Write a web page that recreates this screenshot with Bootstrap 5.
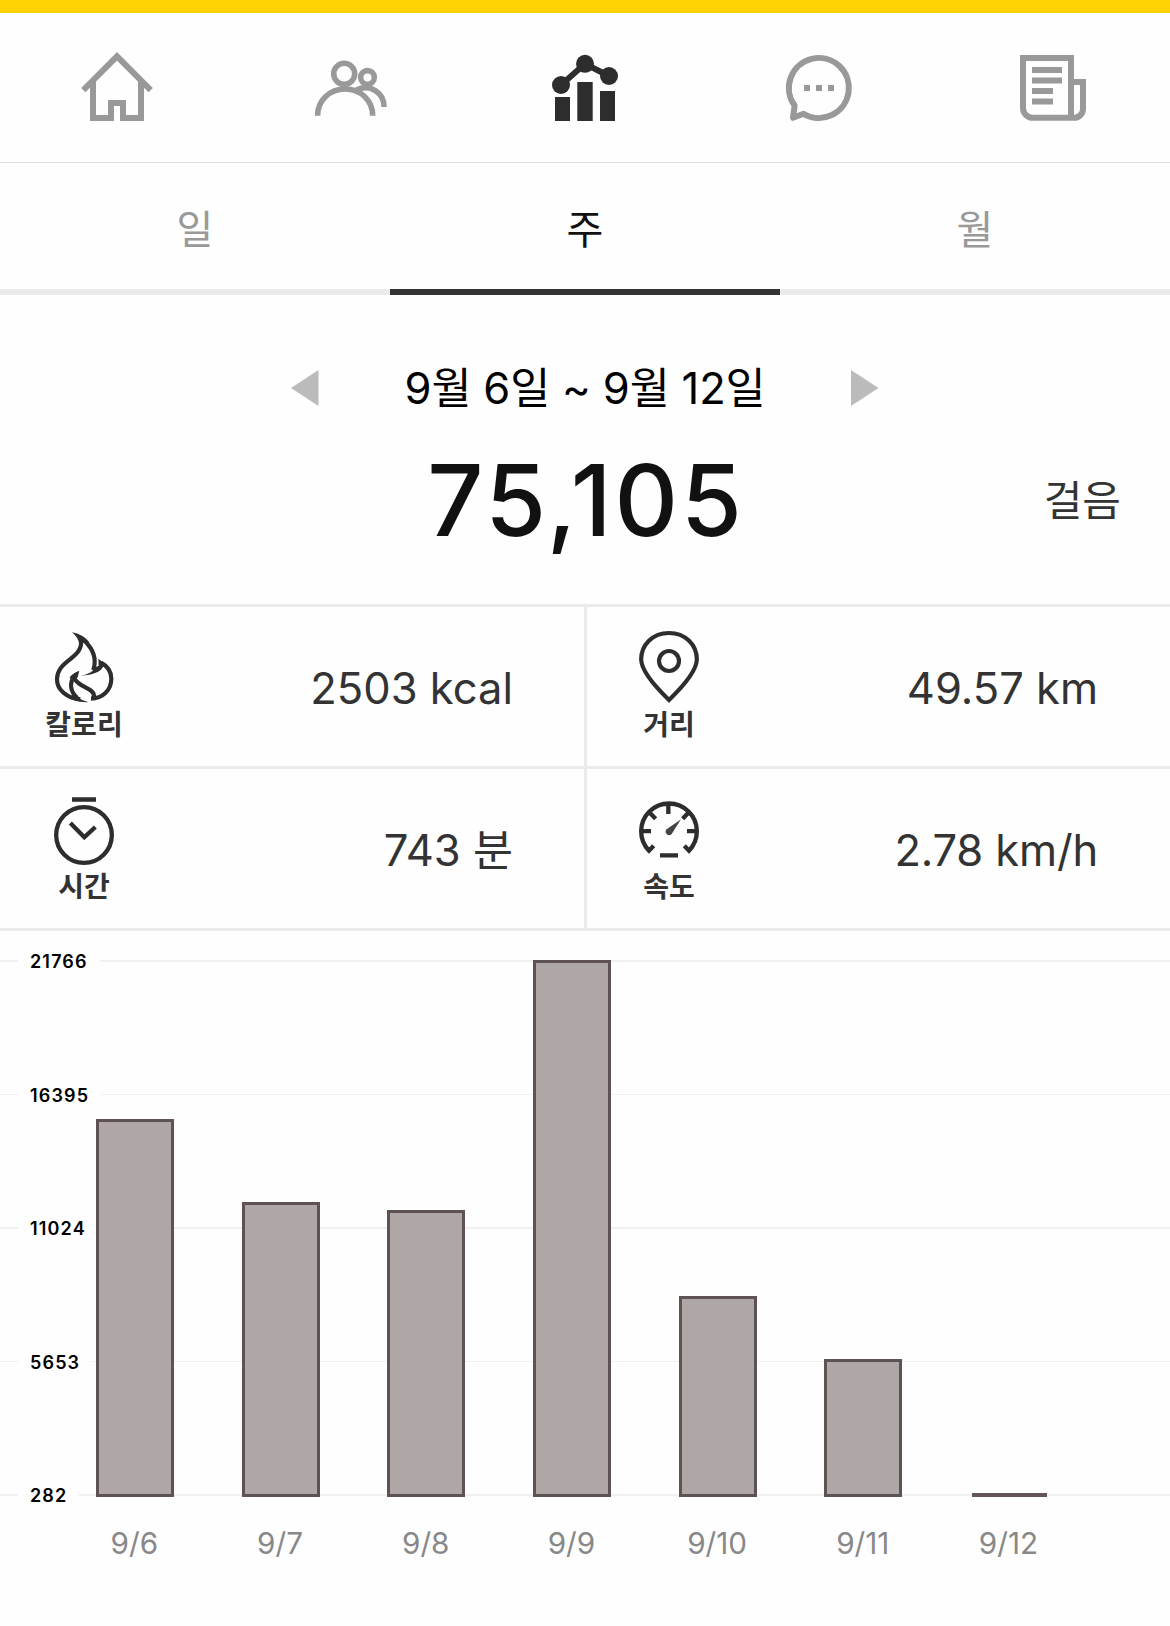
<!DOCTYPE html>
<html lang="ko">
<head>
<meta charset="utf-8">
<meta name="viewport" content="width=device-width, initial-scale=1">
<title>걸음</title>
<link href="https://cdn.jsdelivr.net/npm/bootstrap@5.3.0/dist/css/bootstrap.min.css" rel="stylesheet">
<style>
body{font-family:Inter,"Noto Sans CJK KR",sans-serif;background:#fefefe;color:#333}
.top-strip{height:13px;background:#ffd303}
.main-nav{height:150px;padding-top:37px;border-bottom:1px solid #dedede}
.main-nav a{color:#999;line-height:0}
.main-nav a.active{color:#2d2d2d}
.period-tabs{height:132px}
.period-tabs a{border-bottom:6px solid #ebebeb;color:#999;font-size:40px;line-height:119px;padding-top:7px}
.period-tabs a.active{border-color:#333;color:#111}
.summary{height:309px;padding-top:61px}
.range{height:64px;color:#000;font-size:43.5px;line-height:64px;width:588px;letter-spacing:-.15px}
.steps{height:104px;margin-top:29px}
.total{font-size:98.5px;line-height:104px;font-weight:500;color:#111;letter-spacing:2.9px;margin-right:-2px}
.steps-side{width:400px}
.unit{font-size:42px;line-height:60px;padding-right:49px}
.stat{height:162px;border-top:3px solid #ebebeb}
.stat-left{border-right:3px solid #ebebeb;width:587px}
.stat-right{width:583px}
.stat-icon{width:168px;padding-top:23px}
.stat-right .stat-icon{width:164px}
.stat-name{font-size:28px;line-height:34px;font-weight:600;color:#333;margin-top:2px}
.stat-value{font-size:43.5px;line-height:159px;padding:2px 71px 0 0}
.stat-right .stat-value{padding-right:72px}
.speed{letter-spacing:-.15px}
.chart{border-top:3px solid #ebebeb;height:698px;display:grid;padding-top:29px}
.chart>*{grid-area:1/1}
.rule{height:133.5px;display:flex;align-items:flex-start}
.rule::before,.rule::after{content:"";height:1.500px;background:#f0f0f0;width:18px}
.rule:first-child::before,.rule:first-child::after,.rule:last-child::before,.rule:last-child::after{height:2px}
.rule::after{flex:1}
.rule span{font-size:18px;line-height:20px;margin-top:-8px;padding:0 12px;font-weight:600;color:#000;letter-spacing:1.15px}
.bars{padding-left:96px;gap:67.7px;height:537px}
.bar-box{width:78px;border:3px solid #5f5254;background:#afa6a6}
.bar-flat{width:75px;height:4px;margin-left:2px;background:#635658}
.days{padding:28px 0 0 61.5px}
.days span{width:145.7px;font-size:29.7px;line-height:36px;color:#888;text-align:center}
</style>
</head>
<body>
<div class="top-strip"></div>
<nav class="main-nav nav nav-fill flex-nowrap align-items-start">
  <a class="nav-item w-100" href="#"><svg width="76" height="76" viewBox="79 50 76 76" fill="none" stroke="currentColor" stroke-width="6"><path d="M83.3 90.2 117 56.3l33.7 33.9M93 81v37h18v-15h12v15h18V81"/></svg></a>
  <a class="nav-item w-100" href="#"><svg width="76" height="76" viewBox="313 50 76 76" fill="none" stroke="currentColor" stroke-width="5.6"><circle cx="344.2" cy="73.8" r="10.5"/><circle cx="367.5" cy="77.4" r="6.8"/><path d="M317.6 115.7C317.6 100 330 89 345.1 89s27.6 11 27.6 26.7M356 90.3c14-7.500 28.100 2.700 28.100 16.700"/></svg></a>
  <a class="nav-item w-100 active" href="#"><svg width="76" height="76" viewBox="547 50 76 76" fill="currentColor"><path d="m561 85 24-21.200 24 12.200" fill="none" stroke="currentColor" stroke-width="6"/><circle cx="561" cy="85" r="9"/><circle cx="585" cy="63.8" r="9"/><circle cx="609" cy="76" r="9"/><path d="M555 97h15v24h-15zM577.300 82h15.400v39h-15.400zM600 91h15v30h-15z"/></svg></a>
  <a class="nav-item w-100" href="#"><svg width="76" height="76" viewBox="781 50 76 76" fill="none" stroke="currentColor" stroke-width="6" stroke-linejoin="round"><path d="M794.600 105.600A30 30 0 1 1 803.600 113.800L793 117.800Z"/><path d="M804 88h6m6 0h6m6 0h6"/></svg></a>
  <a class="nav-item w-100" href="#"><svg width="76" height="76" viewBox="1015 50 76 76" fill="none" stroke="currentColor" stroke-width="6"><path d="M1071 118V58h-48v50a9.800 9.800 0 0 0 10 9.800h41a9 9 0 0 0 9-9.800V82h-12M1032 70h30m-30 10.500h30M1032 91h21m-21 10.500h21"/></svg></a>
</nav>
<div class="period-tabs d-flex text-center">
  <a class="col-4 text-decoration-none" href="#">일</a>
  <a class="col-4 text-decoration-none active" href="#">주</a>
  <a class="col-4 text-decoration-none" href="#">월</a>
</div>
<section class="summary">
  <div class="range d-flex mx-auto justify-content-between align-items-center">
    <svg width="28" height="36" viewBox="0 0 28 36"><path d="M27.500 0v36L0 18z" fill="#bbb"/></svg>
    <span>9월 6일 ~ 9월 12일</span>
    <svg width="28" height="36" viewBox="0 0 28 36"><path d="M0 0v36l27.500-18z" fill="#bbb"/></svg>
  </div>
  <div class="steps d-flex align-items-center justify-content-between">
    <div class="steps-side"></div>
    <div class="total">75,105</div>
    <div class="steps-side unit text-end">걸음</div>
  </div>
</section>
<section class="d-flex flex-wrap">
  <div class="stat stat-left d-flex justify-content-between">
    <div class="stat-icon text-center d-flex flex-column align-items-center">
      <svg width="76" height="76" viewBox="78 120 228 228" fill="none" stroke="#2d2d2d" stroke-width="12.500"><path d="M185 146C205 160 224 185 224 214c0 12-1 20-5 27M183 150c3 26-10 40-33 58-24 18-39 34-39 60 0 34 32 57 70 60M162 262c-14 16-12 42 10 62M164 266c14 27 55 27 58 50l-3 10M243 218c19 10 31 26 31 48 0 35-27 59-61 60"/><path fill="#2d2d2d" stroke="none" d="M156 127q32 6 52 29l-19-3-12 8q-1-17-21-34zM163 316q20 15 43 21-42 0-66-15zM178 242l-5 20-16 14-8-14q10-14 29-20zM235 206l25 19-12 7c-8 14-25 22-66 26 23-6 38-13 42-25l12-6z"/></svg>
      <div class="stat-name">칼로리</div>
    </div>
    <div class="stat-value">2503 kcal</div>
  </div>
  <div class="stat stat-right d-flex justify-content-between">
    <div class="stat-icon text-center d-flex flex-column align-items-center">
      <svg width="76" height="76" viewBox="183 120 228 228" fill="none" stroke="#2d2d2d" stroke-width="12.500"><path d="M297 330C270 304 213.500 245 213.500 208c0-43 34-79 83.500-79s83.500 36 83.500 79c0 37-56.500 96-83.500 122z"/><circle cx="297" cy="213" r="30"/></svg>
      <div class="stat-name">거리</div>
    </div>
    <div class="stat-value">49.57 km</div>
  </div>
  <div class="stat stat-left d-flex justify-content-between">
    <div class="stat-icon text-center d-flex flex-column align-items-center">
      <svg width="76" height="76" viewBox="78 606 228 228" fill="none" stroke="#2d2d2d" stroke-width="13"><circle cx="192" cy="735" r="83.500"/><path d="M156 628.500h72M151 699l42 43 33-31"/></svg>
      <div class="stat-name">시간</div>
    </div>
    <div class="stat-value">743 분</div>
  </div>
  <div class="stat stat-right d-flex justify-content-between">
    <div class="stat-icon text-center d-flex flex-column align-items-center">
      <svg width="76" height="76" viewBox="183 606 228 228" fill="none" stroke="#2d2d2d" stroke-width="13"><path d="m251 767-14 15A83.500 83.500 0 1 1 357 782l-14-15M213 723.500h30M351 723.500h30M295 640v32M236 665l21 21M358 665l-20 21M270 796h54"/><path fill="#444" stroke="none" d="m333 688-28 44a10 10 0 0 1-15-14z"/></svg>
      <div class="stat-name">속도</div>
    </div>
    <div class="stat-value speed">2.78 km/h</div>
  </div>
</section>
<section class="chart">
  <div class="rules">
    <div class="rule"><span>21766</span></div>
    <div class="rule"><span>16395</span></div>
    <div class="rule"><span>11024</span></div>
    <div class="rule"><span>5653</span></div>
    <div class="rule"><span>282</span></div>
  </div>
  <div>
    <div class="bars d-flex align-items-end">
      <div class="bar-box" style="height:378px"></div>
      <div class="bar-box" style="height:295px"></div>
      <div class="bar-box" style="height:287px"></div>
      <div class="bar-box" style="height:537px"></div>
      <div class="bar-box" style="height:201px"></div>
      <div class="bar-box" style="height:138px"></div>
      <div class="bar-flat"></div>
    </div>
    <div class="days d-flex">
      <span>9/6</span><span>9/7</span><span>9/8</span><span>9/9</span><span>9/10</span><span>9/11</span><span>9/12</span>
    </div>
  </div>
</section>
<script src="https://cdn.jsdelivr.net/npm/bootstrap@5.3.0/dist/js/bootstrap.bundle.min.js"></script>
</body>
</html>
